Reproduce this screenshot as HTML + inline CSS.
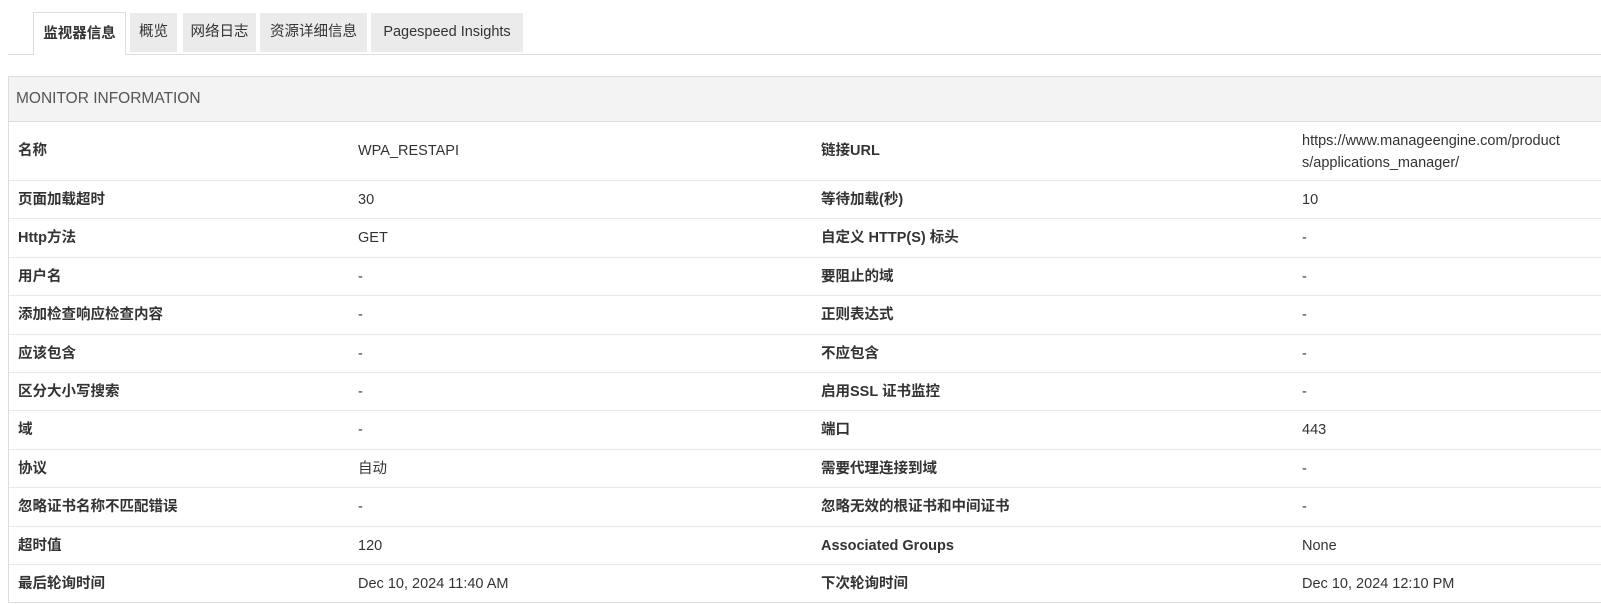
<!DOCTYPE html><html><head><meta charset="utf-8"><style>
body{margin:0;background:#fff;font-family:"Liberation Sans","Noto Sans CJK SC",sans-serif;color:#333;font-size:14.5px;width:1601px;height:604px;overflow:hidden;position:relative}
.tabline{position:absolute;left:8px;right:0;top:54px;border-top:1px solid #ddd}
.tab{position:absolute;top:13px;height:39px;line-height:39px;background:#ebebeb;text-align:center;font-size:14.5px;color:#333}
.tab.a{top:12px;height:43px;line-height:43px;background:#fff;border:1px solid #ddd;border-bottom:none;font-weight:bold;box-sizing:border-box}
.panel{position:absolute;left:8px;top:76px;right:-5px;height:527px;border:1px solid #ddd;box-sizing:border-box}
.hd{height:44px;background:#f3f3f3;border-bottom:1px solid #ddd;line-height:44px;padding-left:7px;font-size:15.5px;color:#555}
.row{position:relative;border-bottom:1px solid #e8e8e8;height:38.4px;box-sizing:border-box}
.row:last-child{border-bottom:none}
.row span{position:absolute;top:0;line-height:38px}
.l{font-weight:bold}
.c1{left:9px}.c2{left:349px}.c3{left:812px}.c4{left:1293px}
</style></head><body>
<div class="tabline"></div>
<div class="tab a" style="left:33px;width:93px">监视器信息</div>
<div class="tab" style="left:130px;width:47px">概览</div>
<div class="tab" style="left:183px;width:73px">网络日志</div>
<div class="tab" style="left:260px;width:107px">资源详细信息</div>
<div class="tab" style="left:371px;width:152px">Pagespeed Insights</div>
<div class="panel">
<div class="hd">MONITOR INFORMATION</div>
<div class="row" style="height:59px"><span class="c1 l" style="line-height:58px">名称</span><span class="c2" style="line-height:58px">WPA_RESTAPI</span><span class="c3 l" style="line-height:58px">链接URL</span><span class="c4" style="top:8px;line-height:22px">https://www.manageengine.com/product<br>s/applications_manager/</span></div>
<div class="row"><span class="c1 l">页面加载超时</span><span class="c2">30</span><span class="c3 l">等待加载(秒)</span><span class="c4">10</span></div>
<div class="row"><span class="c1 l">Http方法</span><span class="c2">GET</span><span class="c3 l">自定义 HTTP(S) 标头</span><span class="c4">-</span></div>
<div class="row"><span class="c1 l">用户名</span><span class="c2">-</span><span class="c3 l">要阻止的域</span><span class="c4">-</span></div>
<div class="row"><span class="c1 l">添加检查响应检查内容</span><span class="c2">-</span><span class="c3 l">正则表达式</span><span class="c4">-</span></div>
<div class="row"><span class="c1 l">应该包含</span><span class="c2">-</span><span class="c3 l">不应包含</span><span class="c4">-</span></div>
<div class="row"><span class="c1 l">区分大小写搜索</span><span class="c2">-</span><span class="c3 l">启用SSL 证书监控</span><span class="c4">-</span></div>
<div class="row"><span class="c1 l">域</span><span class="c2">-</span><span class="c3 l">端口</span><span class="c4">443</span></div>
<div class="row"><span class="c1 l">协议</span><span class="c2">自动</span><span class="c3 l">需要代理连接到域</span><span class="c4">-</span></div>
<div class="row"><span class="c1 l">忽略证书名称不匹配错误</span><span class="c2">-</span><span class="c3 l">忽略无效的根证书和中间证书</span><span class="c4">-</span></div>
<div class="row"><span class="c1 l">超时值</span><span class="c2">120</span><span class="c3 l">Associated Groups</span><span class="c4">None</span></div>
<div class="row"><span class="c1 l">最后轮询时间</span><span class="c2">Dec 10, 2024 11:40 AM</span><span class="c3 l">下次轮询时间</span><span class="c4">Dec 10, 2024 12:10 PM</span></div>
</div>
</body></html>
